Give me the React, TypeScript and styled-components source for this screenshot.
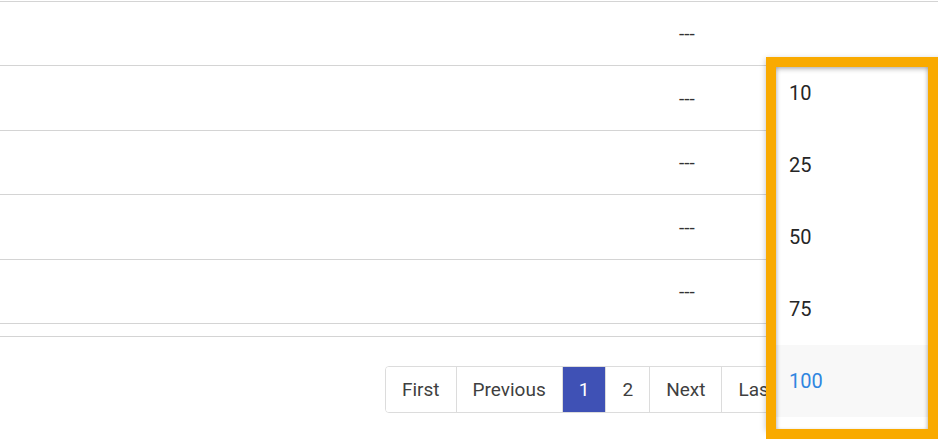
import React from "react";
import styled, { createGlobalStyle } from "styled-components";

const rows = ["---", "---", "---", "---", "---"];
const pageSizes = [10, 25, 50, 75, 100];
const pages = ["First", "Previous", "1", "2", "Next", "Last"];

const GlobalStyle = createGlobalStyle`
	html, body {
		margin: 0;
		padding: 0;
		background: #ffffff;
		font-family: Roboto, "Liberation Sans", Arial, sans-serif;
	}
`;

const App = () => {
	return (
		<Page>
			<GlobalStyle />
			<Table>
				{rows.map((value, idx) => (
					<Row key={idx}>
						<Cell />
						<Cell>{value}</Cell>
					</Row>
				))}
			</Table>
			<Footer>
				<Pagination>
					{pages.map((label) => (
						<PageButton key={label} $active={label === "1"}>
							{label}
						</PageButton>
					))}
				</Pagination>
			</Footer>
			<Menu>
				{pageSizes.map((size) => (
					<MenuItem key={size} $selected={size === 100}>
						{size}
					</MenuItem>
				))}
			</Menu>
			<Highlight />
		</Page>
	);
};

export default App;

const Page = styled.div`
	position: relative;
	height: 439px;
	overflow: hidden;
	padding-top: 1px;
	box-sizing: border-box;
`;

const Table = styled.div`
	display: flex;
	flex-direction: column;
	border-bottom: 1px solid #d4d4d4;
`;

const Row = styled.div`
	display: grid;
	grid-template-columns: 679px 1fr;
	align-items: center;
	height: 64px;
	box-sizing: border-box;
	border-top: 1px solid #d4d4d4;
	&:nth-child(even) {
		height: 65px;
	}
`;

const Cell = styled.div`
	font-size: 19px;
	color: #333333;
`;

const Footer = styled.div`
	display: flex;
	margin-top: 12px;
	border-top: 1px solid #d4d4d4;
	padding: 29px 0 0 385px;
`;

const Pagination = styled.div`
	display: flex;
	height: 47px;
	box-sizing: border-box;
	border: 1px solid #dcdcdc;
	border-radius: 4px;
	overflow: hidden;
`;

const PageButton = styled.div<{ $active?: boolean }>`
	display: flex;
	align-items: center;
	padding: 0 16px;
	font-size: 19px;
	color: ${({ $active }) => ($active ? "#ffffff" : "#3f3f3f")};
	background: ${({ $active }) => ($active ? "#3f51b5" : "#ffffff")};
	& + & {
		border-left: 1px solid #dcdcdc;
	}
`;

const Menu = styled.div`
	position: absolute;
	top: 57px;
	left: 766px;
	width: 190px;
	padding-bottom: 12px;
	background: #ffffff;
	box-shadow: 0 2px 6px rgba(0, 0, 0, 0.25);
`;

const MenuItem = styled.div<{ $selected?: boolean }>`
	display: flex;
	align-items: center;
	height: 72px;
	padding-left: 23px;
	font-size: 20px;
	color: ${({ $selected }) => ($selected ? "#2f86e0" : "#262626")};
	background: ${({ $selected }) => ($selected ? "#f8f8f8" : "transparent")};
`;

const Highlight = styled.div`
	position: absolute;
	top: 57px;
	left: 766px;
	right: 0;
	bottom: 0;
	border: 10px solid #f9aa00;
	box-shadow: inset 0 3px 5px -1px rgba(0, 0, 0, 0.28),
		inset 3px 0 4px -2px rgba(0, 0, 0, 0.15),
		inset -3px 0 4px -2px rgba(0, 0, 0, 0.15);
	pointer-events: none;
`;
